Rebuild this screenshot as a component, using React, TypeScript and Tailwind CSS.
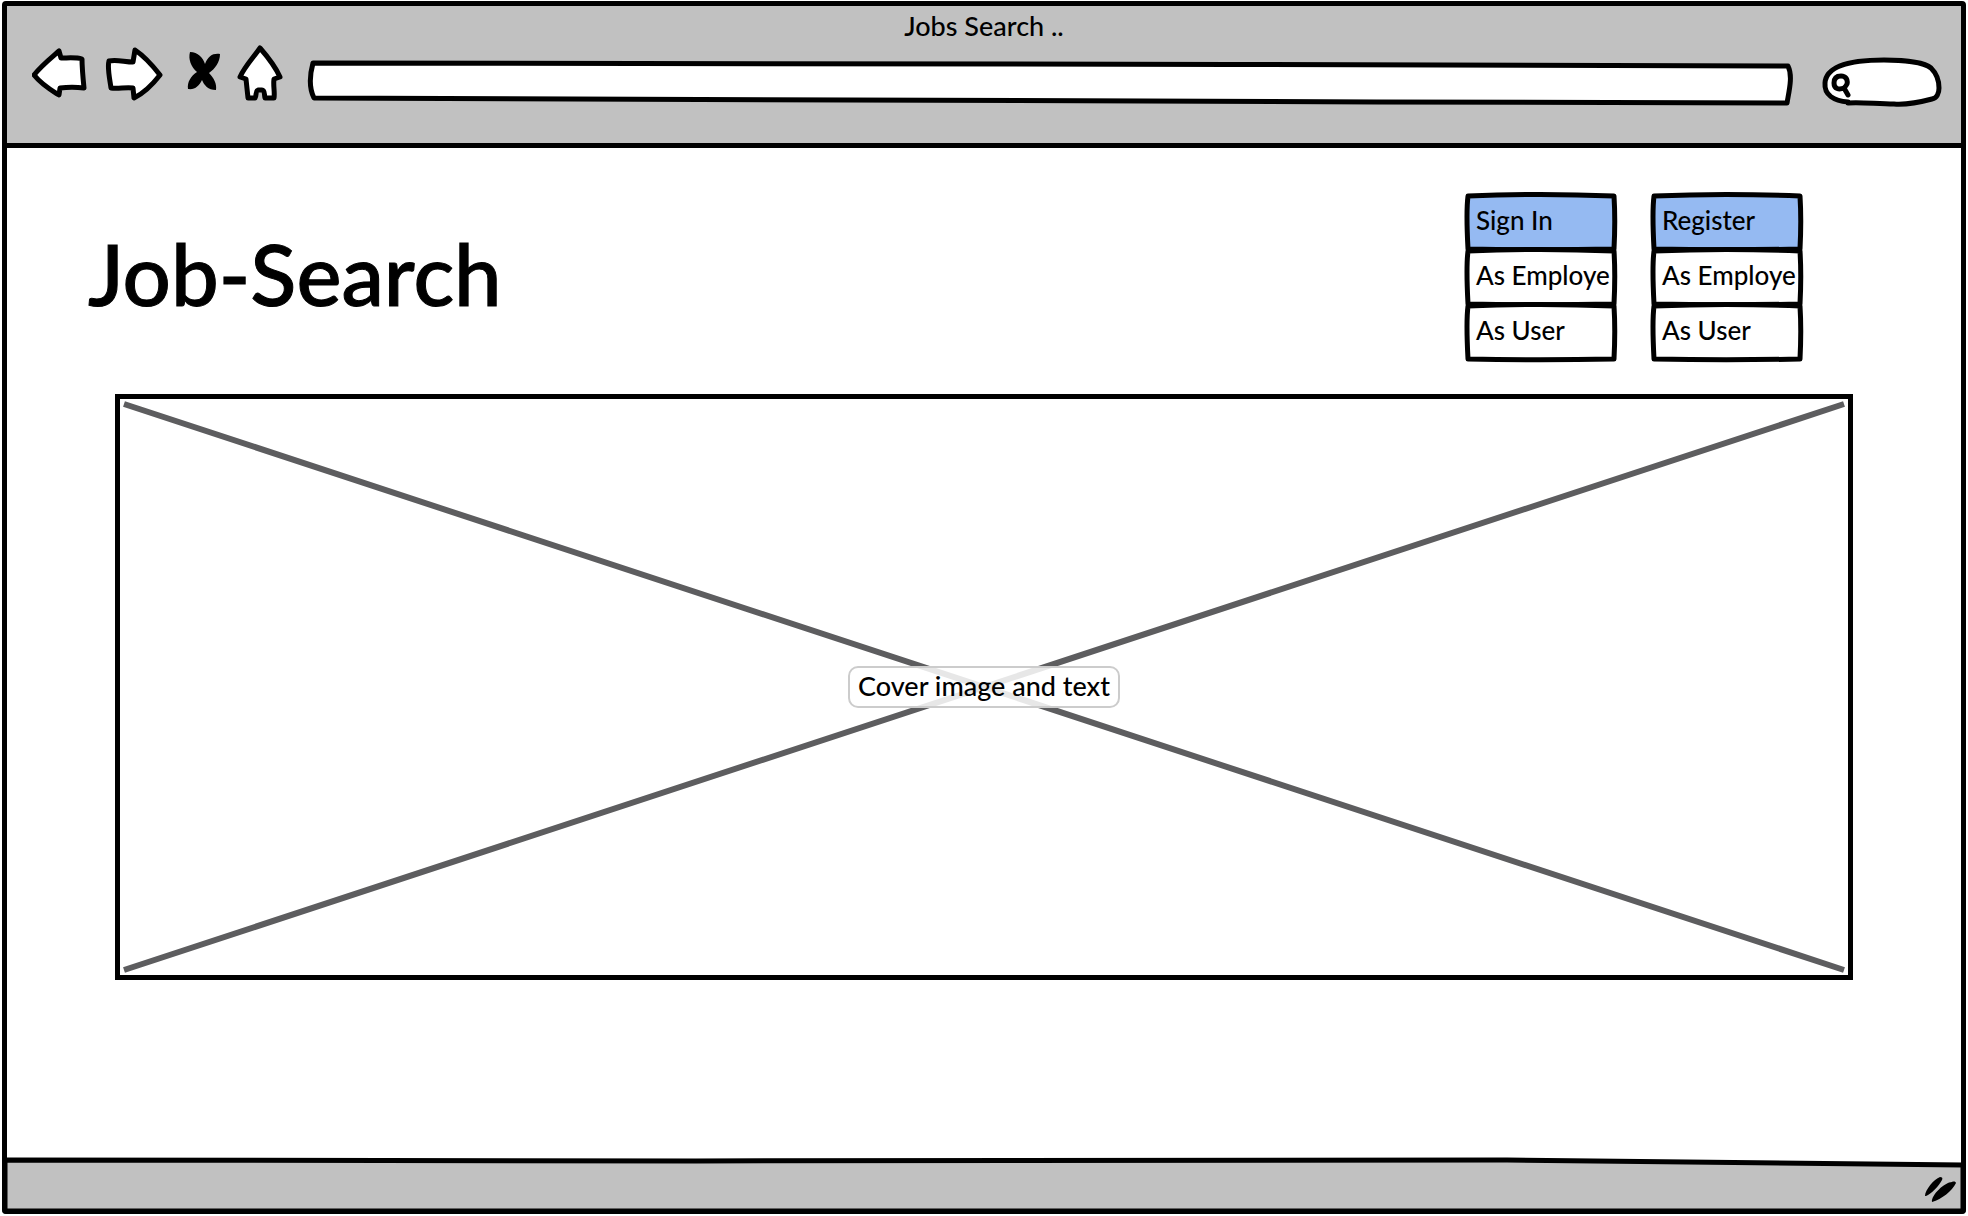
import React from "react";

const ink = {
  fill: "white",
  stroke: "black",
  strokeWidth: 5,
  strokeLinejoin: "round" as const,
  strokeLinecap: "round" as const,
};

/* Hand-drawn outline that stretches with the box it decorates. */
function Outline({ viewBox, d, fill = "white" }: { viewBox: string; d: string; fill?: string }) {
  return (
    <svg
      aria-hidden="true"
      viewBox={viewBox}
      preserveAspectRatio="none"
      className="pointer-events-none absolute inset-0 h-full w-full overflow-visible"
    >
      <path d={d} {...ink} fill={fill} vectorEffect="non-scaling-stroke" />
    </svg>
  );
}

function BackIcon() {
  return (
    <svg aria-hidden="true" viewBox="32 48 56 51" className="h-[51px] w-14">
      <path {...ink} d="M34 75 C41 66 51 58 59 51 L61 58 C68 58 76 57 82 59 C82 68 83 78 84 88 C76 87 68 87 60 88 L59 95 C51 90 42 85 34 75 Z" />
    </svg>
  );
}

function ForwardIcon() {
  return (
    <svg aria-hidden="true" viewBox="105 47 59 54" className="h-[54px] w-[59px]">
      <path {...ink} d="M109 61 C116 59 125 62 133 62 L135 50 C144 56 153 66 160 75 C153 84 144 93 134 98 L133 88 C126 87 118 89 111 88 C110 80 107 68 109 61 Z" />
    </svg>
  );
}

function StopIcon() {
  return (
    <svg aria-hidden="true" viewBox="187 51 33 40" className="h-10 w-[33px]">
      <path d="M190 52 C198 52 203 58 205 64 C208 56 213 53 220 54 C220 62 215 69 209 73 C214 78 217 84 216 90 C208 90 204 85 202 80 C199 86 195 90 188 89 C187 82 191 76 197 72 C191 67 188 59 190 52 Z" />
    </svg>
  );
}

function HomeIcon() {
  return (
    <svg aria-hidden="true" viewBox="237 45 46 56" className="h-14 w-[46px]">
      <path {...ink} d="M260 48 C267 56 275 66 280 77 L274 79 C273 86 275 92 274 98 L265 98 C264 94 265 90 262 90 L258 90 C255 91 257 95 255 98 L248 98 L246 79 L240 77 C245 66 253 58 260 48 Z" />
    </svg>
  );
}

function MenuCell({ label, active = false }: { label: string; active?: boolean }) {
  return (
    <li className="relative h-[55px]">
      <Outline
        viewBox="0 0 152 55"
        d="M3 4 C50 2 100 2 149 4 C150 20 150 38 149 57 C100 58 50 58 3 57 C2 38 1 20 3 4 Z"
        fill={active ? "#95baf2" : "white"}
      />
      <button type="button" className="relative flex h-full w-full items-center whitespace-nowrap pt-0.5 pl-[11px] text-left text-[26px]">
        {label}
      </button>
    </li>
  );
}

function Menu({ items }: { items: string[] }) {
  return (
    <ul className="w-[152px]">
      {items.map((label, i) => (
        <MenuCell key={label} label={label} active={i === 0} />
      ))}
    </ul>
  );
}

export default function App() {
  return (
    <div className="flex min-h-screen flex-col bg-white px-0.5 pt-px pb-0.5 font-['Lato',sans-serif] font-medium text-black">
      <div className="flex grow flex-col rounded-sm border-[5px] border-black">
        <header className="flex h-[142px] flex-col border-b-[5px] border-black bg-[#c1c1c1]">
          <p className="pt-1 text-center text-[27px] leading-8">Jobs Search ..</p>
          <div className="flex items-start pr-[19px] pl-[25px]">
            <button type="button" aria-label="Back" className="mt-1.5"><BackIcon /></button>
            <button type="button" aria-label="Forward" className="mt-[5px] ml-[17px]"><ForwardIcon /></button>
            <button type="button" aria-label="Stop" className="mt-[9px] ml-[23px]"><StopIcon /></button>
            <button type="button" aria-label="Home" className="mt-[3px] ml-[17px]"><HomeIcon /></button>
            <div className="relative mt-[18px] ml-[25px] h-[46px] grow">
              <Outline
                viewBox="0 0 1488 46"
                d="M5 3 C400 2 1000 5 1482 6 C1487 16 1483 31 1481 43 C1000 43 600 38 6 38 C1 28 2 14 5 3 Z"
              />
              <input aria-label="Address" className="relative h-full w-full bg-transparent px-3 text-2xl outline-none" />
            </div>
            <div className="relative mt-[15px] ml-7 h-[50px] w-[120px]">
              <Outline
                viewBox="0 0 120 50"
                d="M26 45 C12 44 2 38 3 26 C4 10 24 3 62 3 C80 3 102 5 109 11 C115 17 117 24 117 31 C117 36 115 41 110 42 C95 46 85 48 72 47 C55 47 40 45 26 46"
              />
              <svg aria-hidden="true" viewBox="0 0 22 25" className="absolute top-4 left-2 h-[25px] w-[22px]">
                <path {...ink} d="M14 15 C9 17 4 16 4 10 C4 5 7 3 11 3 C16 3 18 7 17 11 C16 13 15 14 14 15 L18 22" />
              </svg>
              <input type="search" aria-label="Search" className="relative h-full w-full bg-transparent pr-3 pl-8 text-xl outline-none" />
            </div>
          </div>
        </header>

        <main className="flex grow flex-col">
          <div className="flex items-start justify-between pr-[158px] pl-[81px]">
            <h1 className="mt-[75px] text-[85px] leading-[100px] [-webkit-text-stroke:1px_black]">Job-Search</h1>
            <nav aria-label="Account" className="mt-11 flex gap-[34px]">
              <Menu items={["Sign In", "As Employe", "As User"]} />
              <Menu items={["Register", "As Employe", "As User"]} />
            </nav>
          </div>
          <figure className="relative mx-[108px] mt-[37px] mb-[179px] flex grow items-center justify-center border-[5px] border-black">
            <svg aria-hidden="true" viewBox="0 0 1729 576" preserveAspectRatio="none" className="absolute inset-0 h-full w-full">
              <path d="M4 5 L1725 571 M4 571 L1725 5" stroke="#5d5d5f" strokeWidth="6" fill="none" />
            </svg>
            <figcaption className="relative rounded-[10px] border-2 border-[#cccccc] bg-white/85 px-2 pb-0.5 text-[27px] leading-9">
              Cover image and text
            </figcaption>
          </figure>
        </main>

        <footer className="relative flex h-[50px] items-center justify-end pr-[3px]">
          <Outline viewBox="0 0 1954 50" d="M-2 1 C400 4 1200 0 1500 1 C1700 2 1850 5 1956 6 L1956 52 L-2 52 Z" fill="#c1c1c1" />
          <svg aria-hidden="true" viewBox="0 0 34 28" className="relative mt-3 h-7 w-[34px]">
            <path d="M1 20 C1 14 10 3 16 1 C18 1 19 2 18 4 C15 10 7 18 2 20 Z M8 26 C7 19 21 6 28 6 C30 5 32 6 32 7 C28 15 18 23 8 26 Z" />
          </svg>
        </footer>
      </div>
    </div>
  );
}
